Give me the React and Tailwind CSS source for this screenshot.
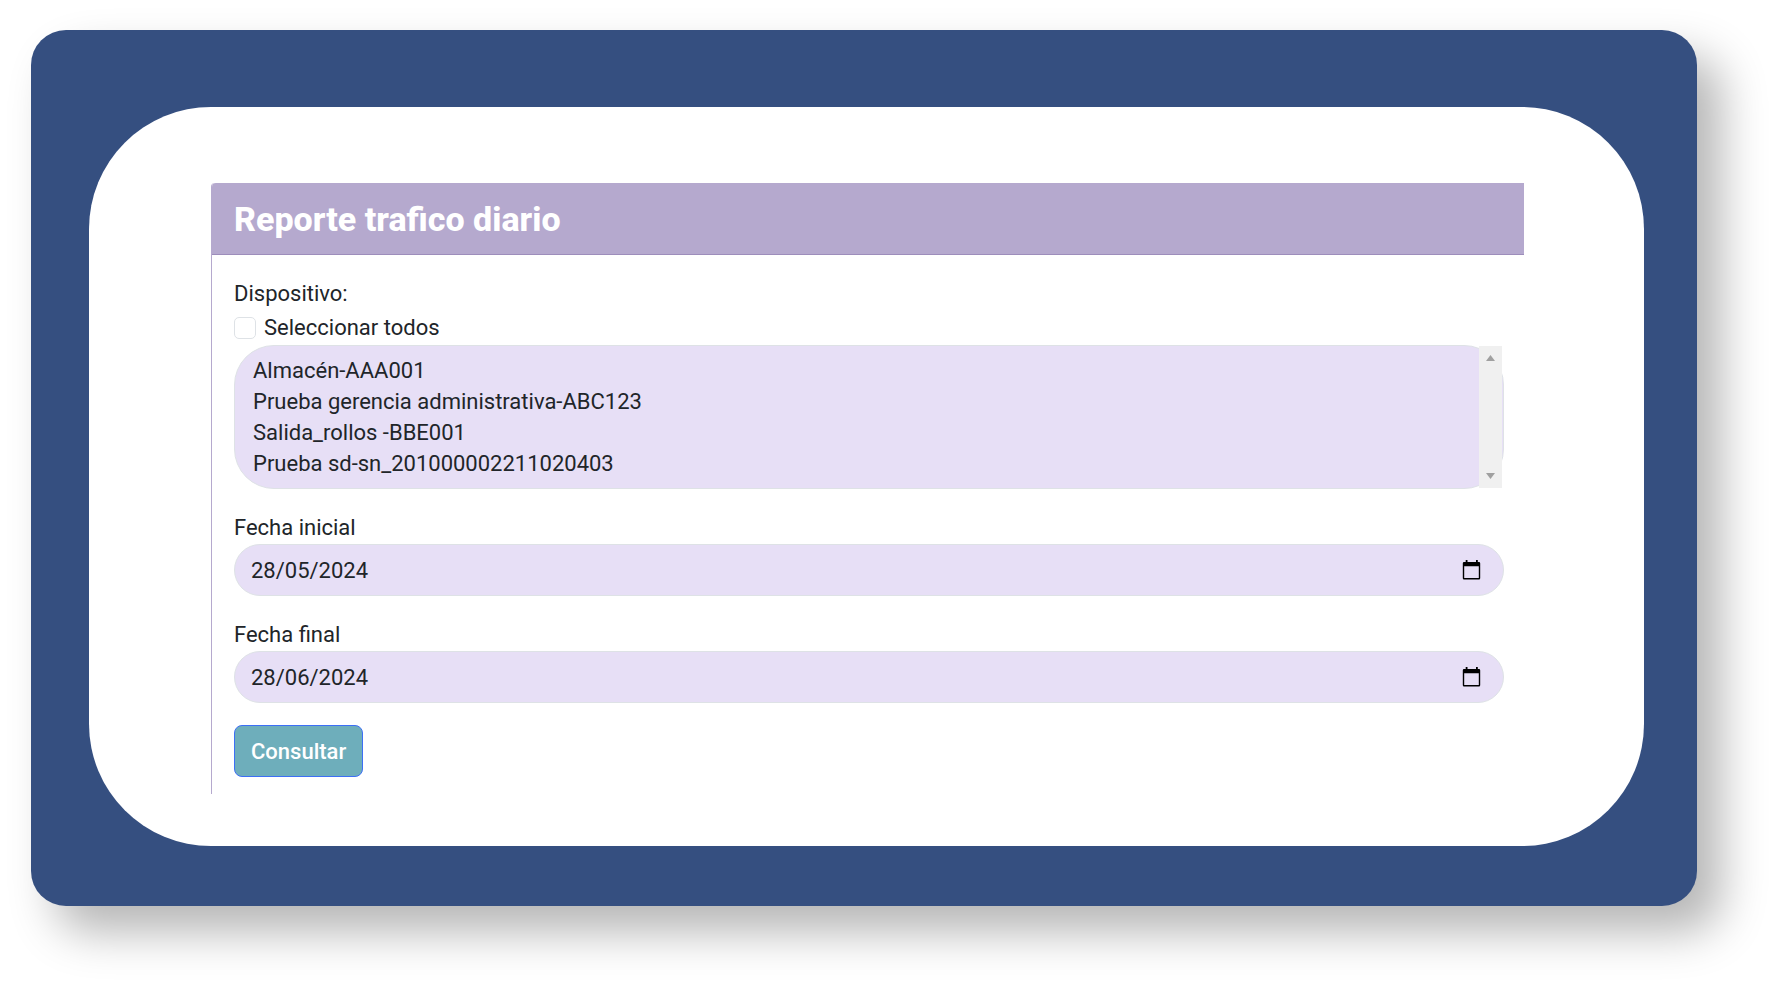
import { useState } from "react";

const devices = [
  "Almacén-AAA001",
  "Prueba gerencia administrativa-ABC123",
  "Salida_rollos -BBE001",
  "Prueba sd-sn_201000002211020403",
];

function CalendarIcon() {
  return (
    <svg viewBox="0 0 20 20" className="block size-5" aria-hidden="true">
      <path
        fill="#000"
        fillRule="evenodd"
        d="M3.700 0h1.800v2h8.500V0h1.800v2h1.200a1.200 1.200 0 0 1 1.200 1.200v15a1.200 1.200 0 0 1-1.200 1.200h-15A1.200 1.200 0 0 1 .800 18.200v-15A1.200 1.200 0 0 1 2 2h1.700zM2.200 6.300V18h14.600V6.300z"
      />
    </svg>
  );
}

function DateField({ id, label, initial }) {
  const [value, setValue] = useState(initial);
  return (
    <div className="mt-[22px]">
      <label htmlFor={id} className="block leading-[33px]">
        {label}
      </label>
      <div className="flex h-[52px] items-center rounded-full border border-[#dee2e6] bg-[#e7dff6] pr-[21px] pl-4">
        <input
          id={id}
          type="text"
          value={value}
          onChange={(e) => setValue(e.target.value)}
          className="min-w-0 flex-1 bg-transparent leading-[33px] outline-none"
        />
        <button type="button" aria-label={"Abrir calendario: " + label}>
          <CalendarIcon />
        </button>
      </div>
    </div>
  );
}

export default function App() {
  return (
    <div className="bg-white pt-[30px] pr-[83px] pb-[83px] pl-[31px] font-['Roboto','Liberation_Sans',sans-serif] text-[22px] text-[#212529]">
      <main className="rounded-[35px] bg-[#354f80] pt-[77px] pr-[53px] pb-[60px] pl-[58px] shadow-[24px_26px_46px_rgba(0,0,0,0.29)]">
        <section className="rounded-[122px] bg-white pt-[76px] pr-[120px] pb-[52px] pl-[122px]">
          <div className="rounded-t-[4px] border-l border-[#b5a9ce] bg-white">
            <header className="flex h-[72px] items-center rounded-tl-[4px] border-b border-[#9d8dbb] bg-[#b5a9ce] px-[22px]">
              <h1 className="text-[34px] leading-10 font-extrabold text-white">
                Reporte trafico diario
              </h1>
            </header>
            <form
              className="pt-[22px] pr-5 pb-[17px] pl-[22px]"
              onSubmit={(e) => e.preventDefault()}
            >
              <label htmlFor="dispositivo" className="block leading-[33px]">
                Dispositivo:
              </label>
              <div className="flex h-[35px] items-center gap-2">
                <input
                  id="todos"
                  type="checkbox"
                  className="size-[22px] appearance-none rounded-[5px] border border-[#dee2e6] bg-white checked:bg-[#b5a9ce]"
                />
                <label htmlFor="todos" className="leading-[33px]">
                  Seleccionar todos
                </label>
              </div>
              <div className="relative">
                <select
                  id="dispositivo"
                  multiple
                  size={4}
                  className="block h-36 w-full appearance-none overflow-hidden rounded-[40px] border border-[#dee2e6] bg-[#e7dff6] pt-3 pl-4 outline-none"
                >
                  {devices.map((d) => (
                    <option key={d} value={d} className="h-[31px] px-[2px] py-0 leading-[31px]">
                      {d}
                    </option>
                  ))}
                </select>
                <div
                  className="absolute inset-y-px right-[2px] flex w-[23px] flex-col items-center justify-between bg-[#f0f0f0] py-[9px]"
                  aria-hidden="true"
                >
                  <svg viewBox="0 0 9 6" className="h-[6px] w-[9px]">
                    <path d="M4.500 0 9 6H0z" fill="#a0a0a0" />
                  </svg>
                  <svg viewBox="0 0 9 6" className="h-[6px] w-[9px]">
                    <path d="M0 0h9L4.500 6z" fill="#a0a0a0" />
                  </svg>
                </div>
              </div>
              <DateField id="inicial" label="Fecha inicial" initial="28/05/2024" />
              <DateField id="final" label="Fecha final" initial="28/06/2024" />
              <button
                type="submit"
                className="mt-[22px] block h-[52px] rounded-lg border border-[#3d6ff5] bg-[#6eaebb] px-4 font-medium text-white"
              >
                Consultar
              </button>
            </form>
          </div>
        </section>
      </main>
    </div>
  );
}
